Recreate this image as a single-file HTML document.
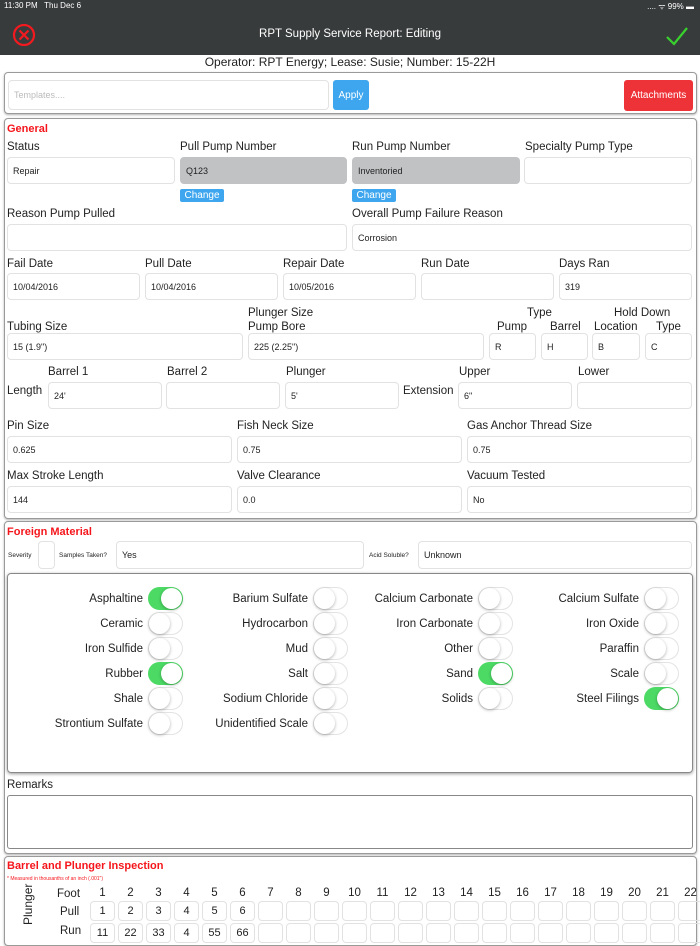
<!DOCTYPE html>
<html><head><meta charset="utf-8"><style>
*{box-sizing:border-box;margin:0;padding:0}
body{width:700px;height:934px;overflow:hidden;background:#fff;font-family:"Liberation Sans",sans-serif;color:#222;position:relative}
.a{position:absolute}
.l{position:absolute;font-size:11.5px;color:#222;white-space:nowrap;padding-top:2px}
.i{position:absolute;border:1px solid #e2e2e2;border-radius:4px;background:#fff;font-size:9px;padding-left:5px;display:flex;align-items:center;color:#222}
.g{background:#c1c2c4;border-color:#c1c2c4}
.box{position:absolute;border:1.5px solid #9a9a9a;border-radius:4px;background:#fff;box-shadow:0 1px 2px rgba(0,0,0,.3)}
.red{color:#f5161c;font-weight:bold;font-size:11px;padding-top:1px}
.t{position:absolute;width:35px;height:23px;border-radius:12px;border:1px solid #e3e3e3;background:#fff}
.t::after{content:"";position:absolute;top:0;left:0;width:21px;height:21px;border-radius:50%;background:#fff;box-shadow:0 1px 3px rgba(0,0,0,.3)}
.t.on{background:#4cd964;border-color:#4cd964}
.t.on::after{left:12px}
.tl{position:absolute;font-size:11.5px;text-align:right;width:140px;white-space:nowrap;padding-top:2px}
.c{position:absolute;width:25px;height:20px;border:1px solid #e2e2e2;border-radius:4px;font-size:11px;text-align:center;line-height:19px}
.n{position:absolute;font-size:11.5px;width:25px;text-align:center}
</style></head><body>
<div class="a" style="left:0;top:0;width:700px;height:55px;background:#383b3c"></div>
<div class="a" style="left:4px;top:1px;font-size:8px;color:#fff">11:30 PM&nbsp;&nbsp; Thu Dec 6</div>
<div class="a" style="right:6px;top:1px;font-size:8px;color:#fff">.... ᯤ 99% ▬</div>
<div class="a" style="left:0;width:700px;top:28px;text-align:center;font-size:11.5px;color:#fff">RPT Supply Service Report: Editing</div>
<svg class="a" style="left:12px;top:23px" width="24" height="24"><circle cx="12" cy="12" r="10" fill="none" stroke="#f21a1f" stroke-width="2.2"/><path d="M7.5 7.5L16.5 16.5M16.5 7.5L7.5 16.5" stroke="#f21a1f" stroke-width="2.2"/></svg>
<svg class="a" style="left:665px;top:25px" width="24" height="22"><path d="M2 12L9 19L22 3" fill="none" stroke="#39d12e" stroke-width="2.2"/></svg>
<div class="a" style="left:0;width:700px;top:55px;text-align:center;font-size:12px">Operator: RPT Energy; Lease: Susie; Number: 15-22H</div>

<div class="box" style="left:4px;top:72px;width:693px;height:42px"></div>
<div class="i" style="left:8px;top:80px;width:321px;height:30px;color:#bbb;font-size:9px">Templates....</div>
<div class="a" style="left:333px;top:80px;width:36px;height:30px;background:#3ea6ee;border-radius:3px;color:#fff;font-size:10px;text-align:center;line-height:32px">Apply</div>
<div class="a" style="left:624px;top:80px;width:69px;height:31px;background:#ee3338;border-radius:3px;color:#fff;font-size:10px;text-align:center;line-height:32px">Attachments</div>

<div class="box" style="left:4px;top:118px;width:693px;height:401px"></div>
<div class="a red" style="left:7px;top:122px">General</div>
<div class="l" style="left:7px;top:139px">Status</div><div class="l" style="left:180px;top:139px">Pull Pump Number</div><div class="l" style="left:352px;top:139px">Run Pump Number</div><div class="l" style="left:525px;top:139px">Specialty Pump Type</div>
<div class="i" style="left:7px;top:157px;width:168px;height:27px">Repair</div>
<div class="i g" style="left:180px;top:157px;width:167px;height:27px">Q123</div>
<div class="i g" style="left:352px;top:157px;width:168px;height:27px">Inventoried</div>
<div class="i" style="left:524px;top:157px;width:168px;height:27px"></div>
<div class="a" style="left:180px;top:189px;width:44px;height:13px;background:#3ea6ee;border-radius:2px;color:#fff;font-size:10px;text-align:center;line-height:14px">Change</div>
<div class="a" style="left:352px;top:189px;width:44px;height:13px;background:#3ea6ee;border-radius:2px;color:#fff;font-size:10px;text-align:center;line-height:14px">Change</div>
<div class="l" style="left:7px;top:206px">Reason Pump Pulled</div><div class="l" style="left:352px;top:206px">Overall Pump Failure Reason</div>
<div class="i" style="left:7px;top:224px;width:340px;height:27px"></div>
<div class="i" style="left:352px;top:224px;width:340px;height:27px">Corrosion</div>
<div class="l" style="left:7px;top:256px">Fail Date</div><div class="l" style="left:145px;top:256px">Pull Date</div><div class="l" style="left:283px;top:256px">Repair Date</div><div class="l" style="left:421px;top:256px">Run Date</div><div class="l" style="left:559px;top:256px">Days Ran</div>
<div class="i" style="left:7px;top:273px;width:133px;height:27px">10/04/2016</div>
<div class="i" style="left:145px;top:273px;width:133px;height:27px">10/04/2016</div>
<div class="i" style="left:283px;top:273px;width:133px;height:27px">10/05/2016</div>
<div class="i" style="left:421px;top:273px;width:133px;height:27px"></div>
<div class="i" style="left:559px;top:273px;width:133px;height:27px">319</div>
<div class="l" style="left:248px;top:305px">Plunger Size</div><div class="l" style="left:527px;top:305px">Type</div><div class="l" style="left:614px;top:305px">Hold Down</div>
<div class="l" style="left:7px;top:319px">Tubing Size</div><div class="l" style="left:248px;top:319px">Pump Bore</div><div class="l" style="left:497px;top:319px">Pump</div><div class="l" style="left:550px;top:319px">Barrel</div><div class="l" style="left:594px;top:319px">Location</div><div class="l" style="left:656px;top:319px">Type</div>
<div class="i" style="left:7px;top:333px;width:236px;height:27px">15 (1.9")</div>
<div class="i" style="left:248px;top:333px;width:236px;height:27px">225 (2.25")</div>
<div class="i" style="left:489px;top:333px;width:47px;height:27px">R</div>
<div class="i" style="left:541px;top:333px;width:47px;height:27px">H</div>
<div class="i" style="left:592px;top:333px;width:48px;height:27px">B</div>
<div class="i" style="left:645px;top:333px;width:47px;height:27px">C</div>
<div class="l" style="left:48px;top:364px">Barrel 1</div><div class="l" style="left:167px;top:364px">Barrel 2</div><div class="l" style="left:286px;top:364px">Plunger</div><div class="l" style="left:459px;top:364px">Upper</div><div class="l" style="left:578px;top:364px">Lower</div>
<div class="l" style="left:7px;top:383px">Length</div><div class="l" style="left:403px;top:383px">Extension</div>
<div class="i" style="left:48px;top:382px;width:114px;height:27px">24'</div>
<div class="i" style="left:166px;top:382px;width:114px;height:27px"></div>
<div class="i" style="left:285px;top:382px;width:114px;height:27px">5'</div>
<div class="i" style="left:458px;top:382px;width:114px;height:27px">6"</div>
<div class="i" style="left:577px;top:382px;width:115px;height:27px"></div>
<div class="l" style="left:7px;top:418px">Pin Size</div><div class="l" style="left:237px;top:418px">Fish Neck Size</div><div class="l" style="left:467px;top:418px">Gas Anchor Thread Size</div>
<div class="i" style="left:7px;top:436px;width:225px;height:27px">0.625</div>
<div class="i" style="left:237px;top:436px;width:225px;height:27px">0.75</div>
<div class="i" style="left:467px;top:436px;width:225px;height:27px">0.75</div>
<div class="l" style="left:7px;top:468px">Max Stroke Length</div><div class="l" style="left:237px;top:468px">Valve Clearance</div><div class="l" style="left:467px;top:468px">Vacuum Tested</div>
<div class="i" style="left:7px;top:486px;width:225px;height:27px">144</div>
<div class="i" style="left:237px;top:486px;width:225px;height:27px">0.0</div>
<div class="i" style="left:467px;top:486px;width:225px;height:27px">No</div>

<div class="box" style="left:4px;top:521px;width:693px;height:333px"></div>
<div class="a red" style="left:7px;top:525px">Foreign Material</div>
<div class="a" style="left:8px;top:552px;font-size:6.5px">Severity</div>
<div class="i" style="left:38px;top:541px;width:17px;height:28px"></div>
<div class="a" style="left:59px;top:552px;font-size:6.5px">Samples Taken?</div>
<div class="i" style="left:116px;top:541px;width:248px;height:28px">Yes</div>
<div class="a" style="left:369px;top:552px;font-size:6.5px">Acid Soluble?</div>
<div class="i" style="left:418px;top:541px;width:274px;height:28px">Unknown</div>
<div class="a" style="left:7px;top:573px;width:686px;height:200px;border:1.5px solid #888;border-radius:4px;box-shadow:0 1px 3px rgba(0,0,0,.4)"></div>

<div class="tl" style="left:3px;top:591px">Asphaltine</div><div class="t on" style="left:148px;top:587px"></div>
<div class="tl" style="left:168px;top:591px">Barium Sulfate</div><div class="t" style="left:313px;top:587px"></div>
<div class="tl" style="left:333px;top:591px">Calcium Carbonate</div><div class="t" style="left:478px;top:587px"></div>
<div class="tl" style="left:499px;top:591px">Calcium Sulfate</div><div class="t" style="left:644px;top:587px"></div>

<div class="tl" style="left:3px;top:616px">Ceramic</div><div class="t" style="left:148px;top:612px"></div>
<div class="tl" style="left:168px;top:616px">Hydrocarbon</div><div class="t" style="left:313px;top:612px"></div>
<div class="tl" style="left:333px;top:616px">Iron Carbonate</div><div class="t" style="left:478px;top:612px"></div>
<div class="tl" style="left:499px;top:616px">Iron Oxide</div><div class="t" style="left:644px;top:612px"></div>

<div class="tl" style="left:3px;top:641px">Iron Sulfide</div><div class="t" style="left:148px;top:637px"></div>
<div class="tl" style="left:168px;top:641px">Mud</div><div class="t" style="left:313px;top:637px"></div>
<div class="tl" style="left:333px;top:641px">Other</div><div class="t" style="left:478px;top:637px"></div>
<div class="tl" style="left:499px;top:641px">Paraffin</div><div class="t" style="left:644px;top:637px"></div>

<div class="tl" style="left:3px;top:666px">Rubber</div><div class="t on" style="left:148px;top:662px"></div>
<div class="tl" style="left:168px;top:666px">Salt</div><div class="t" style="left:313px;top:662px"></div>
<div class="tl" style="left:333px;top:666px">Sand</div><div class="t on" style="left:478px;top:662px"></div>
<div class="tl" style="left:499px;top:666px">Scale</div><div class="t" style="left:644px;top:662px"></div>

<div class="tl" style="left:3px;top:691px">Shale</div><div class="t" style="left:148px;top:687px"></div>
<div class="tl" style="left:168px;top:691px">Sodium Chloride</div><div class="t" style="left:313px;top:687px"></div>
<div class="tl" style="left:333px;top:691px">Solids</div><div class="t" style="left:478px;top:687px"></div>
<div class="tl" style="left:499px;top:691px">Steel Filings</div><div class="t on" style="left:644px;top:687px"></div>

<div class="tl" style="left:3px;top:716px">Strontium Sulfate</div><div class="t" style="left:148px;top:712px"></div>
<div class="tl" style="left:168px;top:716px">Unidentified Scale</div><div class="t" style="left:313px;top:712px"></div>

<div class="l" style="left:7px;top:777px">Remarks</div>
<div class="a" style="left:7px;top:795px;width:686px;height:54px;border:1.5px solid #888;border-radius:3px"></div>

<div class="box" style="left:4px;top:856px;width:693px;height:90px"></div>
<div class="a red" style="left:7px;top:859px">Barrel and Plunger Inspection</div>
<div class="a" style="left:7px;top:876px;font-size:5px;color:#f5161c">* Measured in thousanths of an inch (.001")</div>
<div class="a" style="left:8px;top:898px;font-size:12px;transform:rotate(-90deg);transform-origin:center;width:40px;text-align:center">Plunger</div>
<div class="l" style="left:57px;top:886px">Foot</div>
<div class="l" style="left:60px;top:904px">Pull</div>
<div class="l" style="left:60px;top:923px">Run</div>
<div id="g"></div>
<script>
var h='',p=['1','2','3','4','5','6'],r=['11','22','33','4','55','66'];
for(var k=0;k<22;k++){var x=90+k*28;
h+='<div class="n" style="left:'+x+'px;top:887px">'+(k+1)+'</div>';
h+='<div class="c" style="left:'+x+'px;top:901px">'+(p[k]||'')+'</div>';
h+='<div class="c" style="left:'+x+'px;top:923px">'+(r[k]||'')+'</div>';}
document.getElementById('g').innerHTML=h;
</script>
</body></html>
